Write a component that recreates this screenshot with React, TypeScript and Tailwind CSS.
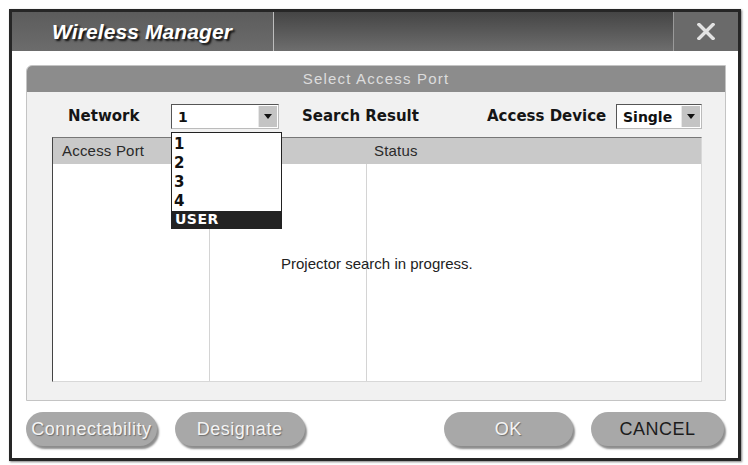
import { ReactNode } from 'react'

const sans = { fontFamily: '"Liberation Sans", Arial, sans-serif' }
const wide = { fontFamily: '"DejaVu Sans", Verdana, sans-serif' }

function ArrowButton() {
  return (
    <span className="flex w-[19px] items-center justify-center self-stretch bg-[#c4c4c4] border-l border-[#e8e8e8]">
      <svg width="8" height="5" viewBox="0 0 8 5">
        <path d="M0 0h8L4 5z" fill="#111" />
      </svg>
    </span>
  )
}

function Select({ value, width }: { value: string; width: string }) {
  return (
    <div
      className={`flex h-[25px] ${width} items-stretch border border-t-[#555] border-l-[#555] border-r-[#bbb] border-b-[#bbb] bg-white p-[1px]`}
    >
      <span className="flex-1 pl-[5px] text-[14px] font-bold leading-[22px] text-[#111]" style={wide}>
        {value}
      </span>
      <ArrowButton />
    </div>
  )
}

function PillButton({ children, width, dark }: { children: ReactNode; width: string; dark?: boolean }) {
  return (
    <button
      className={`h-[34px] ${width} rounded-full bg-[#a8a8a8] text-[18px] tracking-[0.5px] shadow-[2px_3px_2px_rgba(0,0,0,0.45)] ${
        dark ? 'text-[#1c1c1c]' : 'text-[#f4f4f4] [text-shadow:1px_1px_1px_#6f6f6f]'
      }`}
    >
      {children}
    </button>
  )
}

export default function App() {
  return (
    <div className="h-[465px] w-[748px] bg-white pl-[9px] pt-[9px]" style={sans}>
      <div className="flex h-[452px] w-[732px] flex-col border-[3px] border-[#262626] shadow-[1px_1px_2px_rgba(0,0,0,0.5)]">
        {/* title bar */}
        <div className="flex h-[39px] shrink-0">
          <div className="flex w-[261px] items-center bg-gradient-to-b from-[#5c5c5c] to-[#6c6c6c] pl-[40px]">
            <span className="text-[21px] font-bold italic tracking-[0.1px] text-white [text-shadow:2px_2px_2px_#111]">
              Wireless Manager
            </span>
          </div>
          <div className="w-[1px] bg-[#bdbdbd]" />
          <div className="flex-1 bg-gradient-to-b from-[#454545] to-[#6e6e6e]" />
          <div className="w-[1px] bg-[#9a9a9a]" />
          <div className="flex w-[64px] items-center justify-center bg-[#6a6a6a]">
            <svg width="18" height="17" viewBox="0 0 18 17">
              <path d="M2 1.5L16 15.5M16 1.5L2 15.5" stroke="#e2e2e2" strokeWidth="3.4" strokeLinecap="square" />
            </svg>
          </div>
        </div>

        {/* body */}
        <div className="flex flex-1 flex-col bg-white px-[14px] pt-[14px]">
          <div className="flex h-[336px] w-[700px] flex-col rounded-tl-[6px] border border-[#c4c4c4] bg-[#f1f1f1]">
            <div className="h-[26px] rounded-tl-[5px] bg-[#8c8c8c] text-center text-[15px] leading-[26px] tracking-[1.2px] text-[#dcdcdc]">
              Select Access Port
            </div>

            <div className="relative mt-[11px] flex h-[26px] items-center text-[15px] font-bold text-[#151515]" style={wide}>
              <span className="ml-[41px] w-[103px]">Network</span>
              <div className="relative">
                <Select value="1" width="w-[108px]" />
                <div className="absolute left-0 top-[28px] z-10 flex h-[97px] w-[111px] flex-col border border-[#222] bg-white pt-[2px]">
                  {['1', '2', '3', '4'].map(n => (
                    <span key={n} className="h-[19px] pl-[2px] text-[15px] font-bold leading-[19px] text-[#111]">
                      {n}
                    </span>
                  ))}
                  <span className="mt-auto h-[17px] bg-[#222] pl-[3px] text-[14px] font-bold leading-[17px] tracking-[0.5px] text-white">
                    USER
                  </span>
                </div>
              </div>
              <span className="ml-[23px] w-[185px]">Search Result</span>
              <span className="w-[129px]">Access Device</span>
              <Select value="Single" width="w-[86px]" />
            </div>

            {/* access port list */}
            <div className="ml-[25px] mt-[8px] flex h-[245px] w-[650px] flex-col border border-t-[#777] border-l-[#444] border-r-[#d8d8d8] border-b-[#d8d8d8] bg-white">
              <div className="flex h-[26px] shrink-0 items-center bg-[#c9c9c9] text-[15px] tracking-[0.2px] text-[#2a2a2a]">
                <span className="w-[321px] pl-[9px]">Access Port</span>
                <span>Status</span>
              </div>
              <div className="relative flex flex-1">
                <div className="w-[157px] border-r border-[#d4d4d4]" />
                <div className="w-[157px] border-r border-[#d4d4d4]" />
                <div className="flex-1" />
                <span className="absolute left-[228px] top-[89px] text-[15px] text-[#222]">
                  Projector search in progress.
                </span>
              </div>
            </div>
          </div>

          <div className="mt-[11px] flex items-center">
            <PillButton width="w-[131px]">Connectability</PillButton>
            <PillButton width="w-[130px] ml-[18px]">Designate</PillButton>
            <PillButton width="w-[130px] ml-[139px]">OK</PillButton>
            <PillButton width="w-[133px] ml-[18px]" dark>
              CANCEL
            </PillButton>
          </div>
        </div>
      </div>
    </div>
  )
}
